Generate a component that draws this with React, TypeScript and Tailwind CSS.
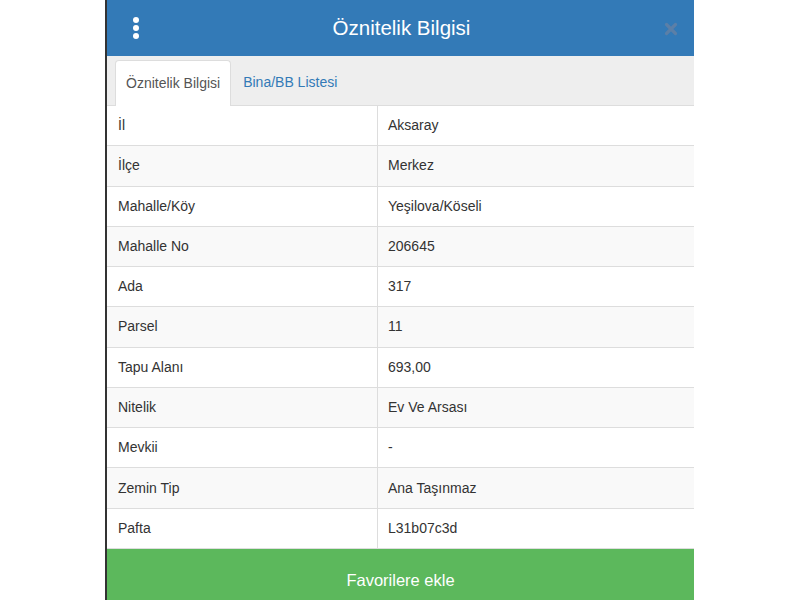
const rows: [string, string][] = [
  ['İl', 'Aksaray'],
  ['İlçe', 'Merkez'],
  ['Mahalle/Köy', 'Yeşilova/Köseli'],
  ['Mahalle No', '206645'],
  ['Ada', '317'],
  ['Parsel', '11'],
  ['Tapu Alanı', '693,00'],
  ['Nitelik', 'Ev Ve Arsası'],
  ['Mevkii', '-'],
  ['Zemin Tip', 'Ana Taşınmaz'],
  ['Pafta', 'L31b07c3d'],
];

export default function App() {
  return (
    <div className="w-[800px] h-[600px] overflow-hidden bg-white font-['Liberation_Sans',Arial,sans-serif]">
      <div className="ml-[105px] w-[589px] h-[600px] border-l-2 border-[#333] flex flex-col">
        {/* Header */}
        <div className="h-[56px] shrink-0 bg-[#337ab7] flex items-center pl-[26px] pr-[16px]">
          <div className="flex flex-col gap-[2px]">
            <span className="w-[6px] h-[6px] rounded-full bg-white" />
            <span className="w-[6px] h-[6px] rounded-full bg-white" />
            <span className="w-[6px] h-[6px] rounded-full bg-white" />
          </div>
          <h1 className="flex-1 text-center text-white text-[20.5px] leading-none">Öznitelik Bilgisi</h1>
          <svg width="14" height="14" viewBox="0 0 14 14" className="mt-[2px]">
            <path d="M2.5 2.5 L11.5 11.5 M11.5 2.5 L2.5 11.5" stroke="#5b7fa7" strokeWidth="3.2" strokeLinecap="round" />
          </svg>
        </div>

        {/* Tabs */}
        <div className="h-[50px] shrink-0 bg-[#eeeeee] border-b border-[#ddd] flex items-end pl-[8px] gap-[2px]">
          <div className="h-[46px] px-[10px] flex items-center bg-white border border-b-0 border-[#ddd] rounded-t-[4px] text-[14px] text-[#555] -mb-px">
            Öznitelik Bilgisi
          </div>
          <div className="h-[46px] px-[10px] flex items-center text-[14px] text-[#337ab7]">
            Bina/BB Listesi
          </div>
        </div>

        {/* Table */}
        <div className="h-[443px] shrink-0 flex flex-col">
          {rows.map(([k, v], i) => (
            <div
              key={k}
              className={`flex-1 grid grid-cols-[271px_1fr] border-b border-[#ddd] text-[14px] text-[#333] ${
                i % 2 === 1 ? 'bg-[#f9f9f9]' : 'bg-white'
              }`}
            >
              <div className="flex items-center px-[11px] border-r border-[#ddd]">{k}</div>
              <div className="flex items-center px-[10px]">{v}</div>
            </div>
          ))}
        </div>

        {/* Footer button */}
        <div className="h-[62px] shrink-0 bg-[#5cb85c] flex items-center justify-center text-white text-[16.5px]">
          Favorilere ekle
        </div>
      </div>
    </div>
  );
}
